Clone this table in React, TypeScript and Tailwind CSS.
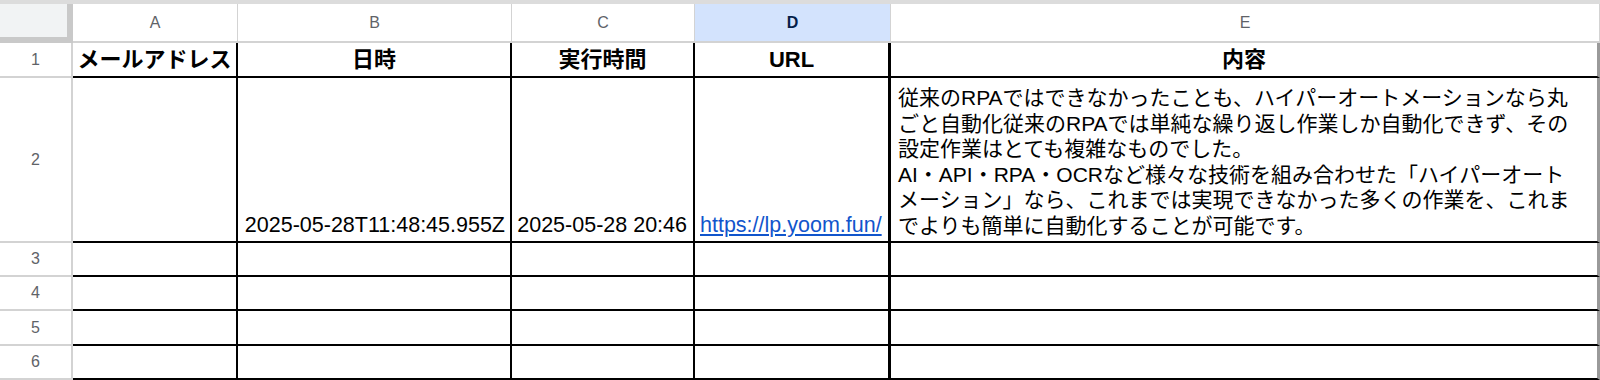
import React from "react";

const font = "font-['Liberation_Sans','Noto_Sans_CJK_JP',sans-serif]";

const colHead =
  "flex items-center justify-center border-r border-b-2 border-[#d3d3d3] text-[16px] text-[#5f6368]";
const rowHead =
  "flex items-center justify-center border-r-2 border-b-2 border-[#d3d3d3] text-[16px] text-[#5f6368]";
const cell = "border-r-2 border-b-2 border-black";
const cellD = "border-r-[3px] border-b-2 border-black";
const cellE = "border-b-2 border-b-black border-r-[3px] border-r-[#9a9a9a]";
const head = "flex items-center justify-center text-[22px] font-bold text-black leading-[25px]";

export default function App() {
  const emptyRows = [3, 4, 5, 6];
  return (
    <div className={`w-[1600px] h-[380px] overflow-hidden bg-white ${font}`}>
      <div className="grid grid-cols-[73px_165px_274px_183px_196px_709px] grid-rows-[4px_39px_35px_165px_34px_34px_35px_34px]">
        <div className="col-span-6 bg-[#dcdcdc]" />

        {/* column headers */}
        <div className="bg-[#f1f3f4] border-r-[6px] border-b-[6px] border-[#c9c9c9]" />
        <div className={colHead}>A</div>
        <div className={colHead}>B</div>
        <div className={colHead}>C</div>
        <div className={`${colHead} bg-[#d3e3fd] text-[#041e49] font-bold`}>D</div>
        <div className={colHead}>E</div>

        {/* row 1 */}
        <div className={rowHead}>1</div>
        <div className={`${cell} ${head}`}>メールアドレス</div>
        <div className={`${cell} ${head}`}>日時</div>
        <div className={`${cell} ${head}`}>実行時間</div>
        <div className={`${cellD} ${head}`}>URL</div>
        <div className={`${cellE} ${head}`}>内容</div>

        {/* row 2 */}
        <div className={rowHead}>2</div>
        <div className={cell} />
        <div className={`${cell} flex items-end justify-end px-[5px] pb-[3px] text-[21.5px] leading-[25px] text-black whitespace-nowrap`}>
          2025-05-28T11:48:45.955Z
        </div>
        <div className={`${cell} flex items-end justify-end px-[6px] pb-[3px] text-[21.5px] leading-[25px] text-black whitespace-nowrap`}>
          2025-05-28 20:46
        </div>
        <div className={`${cellD} flex items-end justify-start px-[5px] pb-[3px] text-[21.5px] leading-[25px] whitespace-nowrap`}>
          <span className="text-[#1155cc] underline">https://lp.yoom.fun/</span>
        </div>
        <div className={`${cellE} flex flex-col justify-end pl-[7px] pb-[3px] text-[21px] leading-[25.5px] text-black whitespace-nowrap`}>
          <span>従来のRPAではできなかったことも、ハイパーオートメーションなら丸</span>
          <span>ごと自動化従来のRPAでは単純な繰り返し作業しか自動化できず、その</span>
          <span>設定作業はとても複雑なものでした。</span>
          <span>AI・API・RPA・OCRなど様々な技術を組み合わせた「ハイパーオート</span>
          <span>メーション」なら、これまでは実現できなかった多くの作業を、これま</span>
          <span>でよりも簡単に自動化することが可能です。</span>
        </div>

        {emptyRows.map((n) => (
          <React.Fragment key={n}>
            <div className={rowHead}>{n}</div>
            <div className={cell} />
            <div className={cell} />
            <div className={cell} />
            <div className={cellD} />
            <div className={cellE} />
          </React.Fragment>
        ))}
      </div>
    </div>
  );
}
